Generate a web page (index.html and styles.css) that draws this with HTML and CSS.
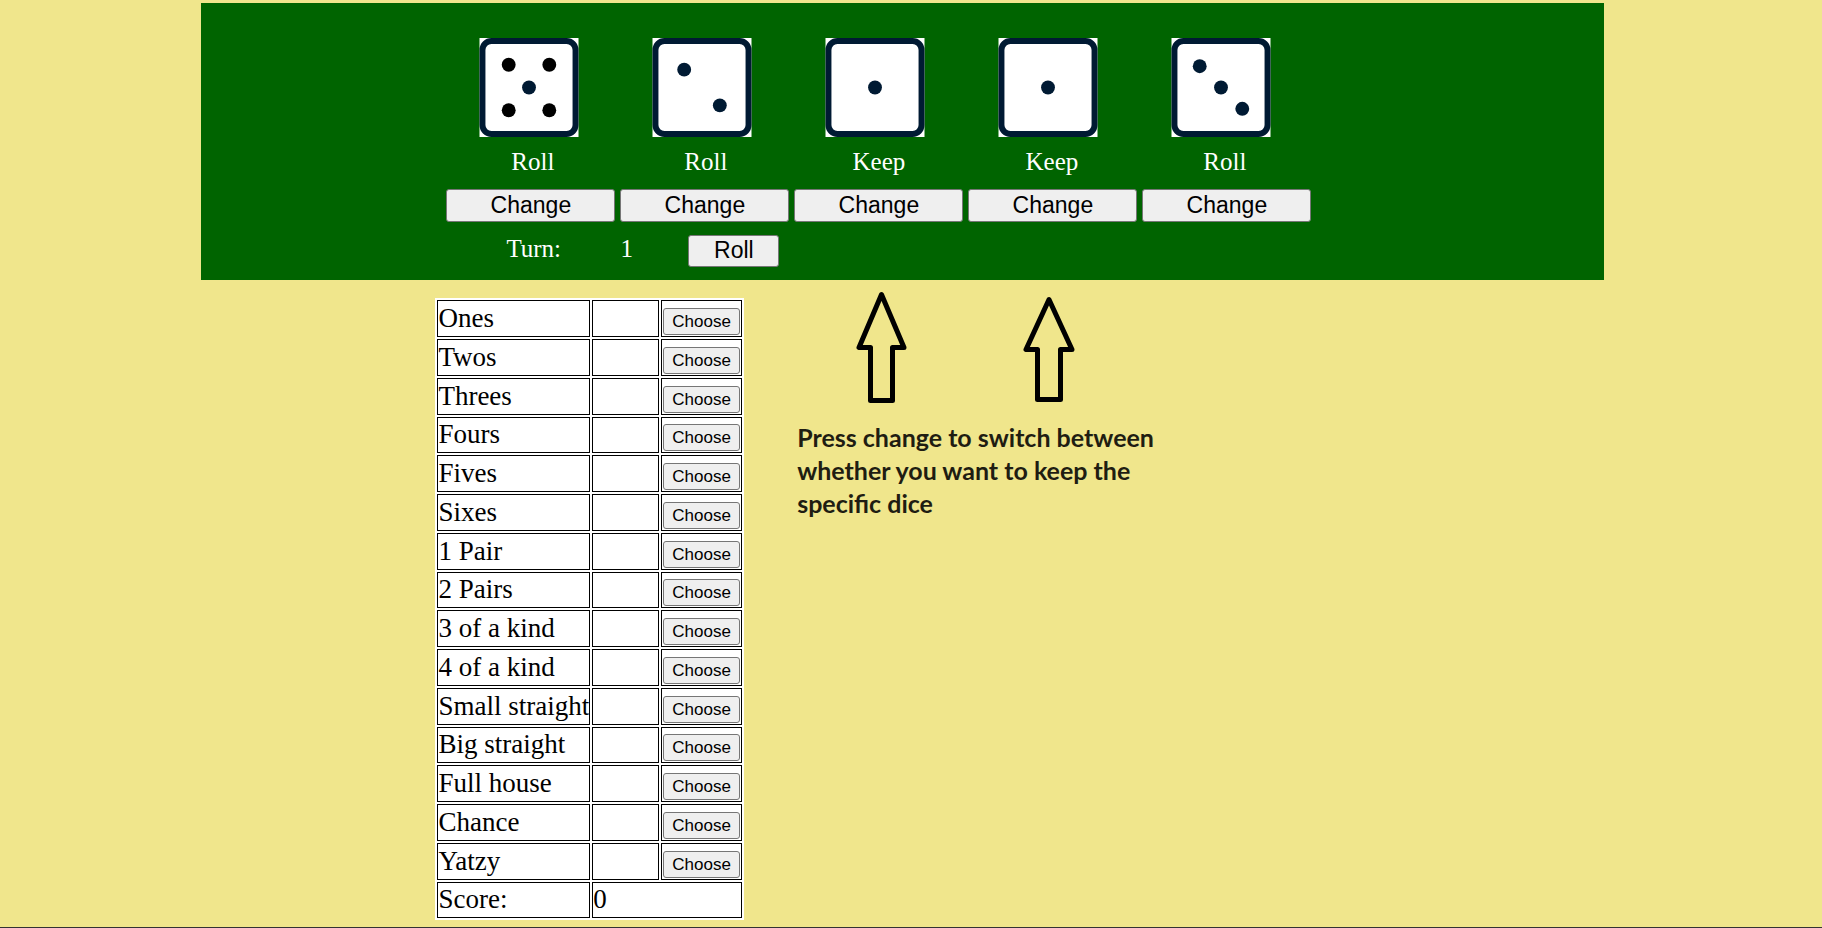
FILE: index.html
```html
<!DOCTYPE html>
<html lang="en">
<head>
<meta charset="utf-8">
<title>Yatzy</title>
<link rel="stylesheet" href="styles.css">
<script src="score.js" defer></script>
</head>
<body>
<main class="page">
  <section class="board" aria-label="Dice">
    <div class="dice">
      <svg class="die" viewBox="0 0 100 100" role="img" aria-label="Five"><rect class="die-back" width="100" height="100"/><rect class="die-face" x="3" y="3" width="94" height="94" rx="9"/><g class="pip-dark"><circle cx="29.500" cy="27" r="7"/><circle cx="70.500" cy="27" r="7"/><circle cx="29.500" cy="73" r="7"/><circle cx="70.500" cy="73" r="7"/></g><circle class="pip" cx="50" cy="50" r="7"/></svg>
      <svg class="die" viewBox="0 0 100 100" role="img" aria-label="Two"><rect class="die-back" width="100" height="100"/><rect class="die-face" x="3" y="3" width="94" height="94" rx="9"/><circle class="pip" cx="32" cy="32" r="7"/><circle class="pip" cx="68" cy="68" r="7"/></svg>
      <svg class="die" viewBox="0 0 100 100" role="img" aria-label="One"><rect class="die-back" width="100" height="100"/><rect class="die-face" x="3" y="3" width="94" height="94" rx="9"/><circle class="pip" cx="50" cy="50" r="7"/></svg>
      <svg class="die" viewBox="0 0 100 100" role="img" aria-label="One"><rect class="die-back" width="100" height="100"/><rect class="die-face" x="3" y="3" width="94" height="94" rx="9"/><circle class="pip" cx="50" cy="50" r="7"/></svg>
      <svg class="die" viewBox="0 0 100 100" role="img" aria-label="Three"><rect class="die-back" width="100" height="100"/><rect class="die-face" x="3" y="3" width="94" height="94" rx="9"/><circle class="pip" cx="28.500" cy="28.500" r="7"/><circle class="pip" cx="50" cy="50" r="7"/><circle class="pip" cx="71.500" cy="71.500" r="7"/></svg>
    </div>
    <div class="states">
      <span>Roll</span><span>Roll</span><span>Keep</span><span>Keep</span><span>Roll</span>
    </div>
    <div class="changes">
      <button class="btn">Change</button><button class="btn">Change</button><button class="btn">Change</button><button class="btn">Change</button><button class="btn">Change</button>
    </div>
    <div class="turn">
      <span class="turn-label">Turn:</span><span class="turn-count">1</span><button class="btn btn-roll">Roll</button>
    </div>
  </section>
  <section class="sheet">
    <table class="scores">
      <tbody>
        <tr><td>Ones</td><td class="points"></td><td class="pick"><button class="choose">Choose</button></td></tr>
        <tr><td>Twos</td><td class="points"></td><td class="pick"><button class="choose">Choose</button></td></tr>
        <tr><td>Threes</td><td class="points"></td><td class="pick"><button class="choose">Choose</button></td></tr>
        <tr><td>Fours</td><td class="points"></td><td class="pick"><button class="choose">Choose</button></td></tr>
        <tr><td>Fives</td><td class="points"></td><td class="pick"><button class="choose">Choose</button></td></tr>
        <tr><td>Sixes</td><td class="points"></td><td class="pick"><button class="choose">Choose</button></td></tr>
        <tr><td>1 Pair</td><td class="points"></td><td class="pick"><button class="choose">Choose</button></td></tr>
        <tr><td>2 Pairs</td><td class="points"></td><td class="pick"><button class="choose">Choose</button></td></tr>
        <tr><td>3 of a kind</td><td class="points"></td><td class="pick"><button class="choose">Choose</button></td></tr>
        <tr><td>4 of a kind</td><td class="points"></td><td class="pick"><button class="choose">Choose</button></td></tr>
        <tr><td>Small straight</td><td class="points"></td><td class="pick"><button class="choose">Choose</button></td></tr>
        <tr><td>Big straight</td><td class="points"></td><td class="pick"><button class="choose">Choose</button></td></tr>
        <tr><td>Full house</td><td class="points"></td><td class="pick"><button class="choose">Choose</button></td></tr>
        <tr><td>Chance</td><td class="points"></td><td class="pick"><button class="choose">Choose</button></td></tr>
        <tr><td>Yatzy</td><td class="points"></td><td class="pick"><button class="choose">Choose</button></td></tr>
        <tr><td>Score:</td><td colspan="2">0</td></tr>
      </tbody>
    </table>
    <aside class="guide">
      <div class="arrows">
        <svg class="arrow" viewBox="0 0 52 114" aria-hidden="true"><path d="M25.500 4.500 L3 57.500 H14.500 V110.500 H36.500 V57.500 H48 Z"/></svg>
        <svg class="arrow" viewBox="0 0 52 114" aria-hidden="true"><path d="M26 9.500 L3 59.500 H14.500 V109.500 H37.500 V59.500 H49 Z"/></svg>
      </div>
      <p class="hint">Press change to switch between whether you want to keep the specific dice</p>
    </aside>
  </section>
</main>
</body>
</html>
```
FILE: styles.css
```css
* { box-sizing: border-box; }

body {
  margin: 0;
  min-height: 100vh;
  background: #f0e68c;
  border-bottom: 1px solid #333;
  font-family: "Liberation Serif", "Times New Roman", serif;
}

.page { padding: 3px calc(12% - 1px) 0 calc(11% + 1px); }

.board {
  background: #006400;
  color: #fff;
  font-size: 25px;
  line-height: 28px;
  padding: 35px 0 13px 245px;
}

.dice {
  display: flex;
  gap: 73px;
  padding-left: 33px;
}

.die { width: 100px; height: 99px; flex: none; }
.die-back { fill: #fff; }
.die-face { fill: #fff; stroke: #001a33; stroke-width: 6; }
.pip { fill: #001a33; }
.pip-dark { fill: #000; }

.states, .changes {
  display: grid;
  grid-template-columns: repeat(5, 169px);
  gap: 5px;
}

.states { margin: 11px 0 13px; text-align: center; gap: 4px; padding-left: 2px; }

.btn, .choose {
  background: #efefef;
  color: #000;
  border: 1px solid #767676;
  border-radius: 3px;
  font-family: "Liberation Sans", Arial, sans-serif;
}

.btn { font-size: 23px; line-height: 26px; height: 33px; padding: 0 0 2px; }

.turn { display: flex; padding-left: 60px; margin-top: 13px; }
.turn-label { width: 114px; }
.turn-count { width: 68px; }
.btn-roll { width: 91px; height: 32px; }

.sheet {
  display: flex;
  align-items: flex-start;
  padding-left: 234px;
}

.scores {
  margin: 18px 0 4px;
  background: #fff;
  border-spacing: 2px;
  font-size: 27px;
  line-height: 31px;
}

.scores td {
  height: 37px;
  border: 1px solid #000;
  padding: 0 0 1px;
  white-space: nowrap;
}

.scores tr:nth-child(4n) td { height: 36px; }
.scores .points { width: 67px; }
.scores .pick { vertical-align: bottom; }

.choose {
  display: block;
  width: 77px;
  height: 27px;
  margin: 6px 1px 0;
  padding: 0;
  font-size: 17px;
  line-height: 20px;
}

.guide { padding: 10px 0 0 53px; }
.arrows { display: flex; gap: 115px; padding-left: 59px; }
.arrow { width: 52px; height: 114px; }
.arrow path { fill: none; stroke: #000; stroke-width: 5; stroke-linejoin: round; }

.hint {
  max-width: 370px;
  margin: 17px 0 0;
  color: #1f1d12;
  font: bold 25px/33px Lato, sans-serif;
}
```
FILE: score.js
```js
document.querySelectorAll(".changes .btn").forEach((button, i) => {
  button.addEventListener("click", () => {
    const state = document.querySelectorAll(".states span")[i];
    state.textContent = state.textContent === "Keep" ? "Roll" : "Keep";
  });
});
```
